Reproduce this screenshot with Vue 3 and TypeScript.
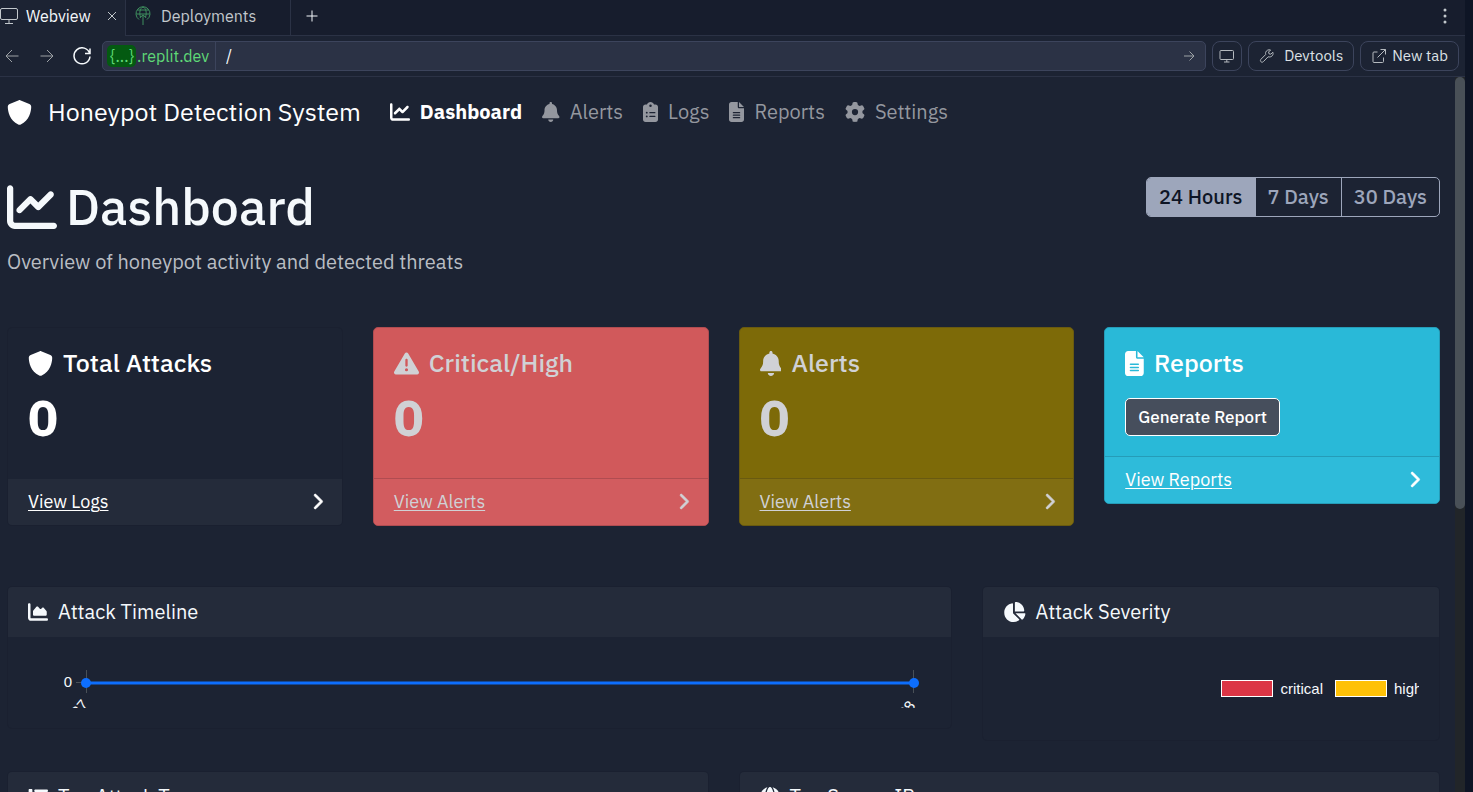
<script setup lang="ts">
import { ref } from 'vue'

interface Glyph {
  w: number
  d: string
}

const glyphs: Record<string, Glyph> = {
  shield: { w: 512, d: 'M256 0c4.6 0 9.2 1 13.4 2.9L457.7 82.8c22 9.3 38.4 31 38.3 57.2c-.5 99.2-41.3 280.7-213.6 363.2c-16.7 8-36.1 8-52.8 0C57.3 420.7 16.5 239.2 16 140c-.1-26.2 16.3-47.9 38.3-57.2L242.7 2.9C246.8 1 251.4 0 256 0z' },
  line: { w: 512, d: 'M64 64c0-17.7-14.3-32-32-32S0 46.3 0 64V400c0 44.2 35.8 80 80 80H480c17.7 0 32-14.3 32-32s-14.3-32-32-32H80c-8.8 0-16-7.2-16-16V64zm406.6 86.6c12.5-12.5 12.5-32.8 0-45.3s-32.8-12.5-45.3 0L320 210.7l-57.4-57.4c-12.5-12.5-32.8-12.5-45.3 0l-112 112c-12.5 12.5-12.5 32.8 0 45.3s32.8 12.5 45.3 0L240 221.3l57.4 57.4c12.5 12.5 32.8 12.5 45.3 0l128-128z' },
  bell: { w: 448, d: 'M224 0c-17.7 0-32 14.3-32 32V51.2C119 66 64 130.6 64 208v18.8c0 47-17.3 92.4-48.5 127.6l-7.4 8.3c-8.4 9.4-10.4 22.9-5.3 34.4S19.4 416 32 416H416c12.6 0 24-7.4 29.2-18.9s3.1-25-5.3-34.4l-7.4-8.3C401.3 319.2 384 273.9 384 226.8V208c0-77.4-55-142-128-156.8V32c0-17.7-14.3-32-32-32zm45.3 493.3c12-12 18.7-28.3 18.7-45.3H224 160c0 17 6.7 33.3 18.7 45.3s28.3 18.7 45.3 18.7s33.3-6.7 45.3-18.7z' },
  clipboard: { w: 384, d: 'M192 0c-41.8 0-77.4 26.7-90.5 64H64C28.7 64 0 92.7 0 128V448c0 35.3 28.7 64 64 64H320c35.3 0 64-28.7 64-64V128c0-35.3-28.7-64-64-64H282.5C269.4 26.7 233.8 0 192 0zm0 64a32 32 0 1 1 0 64 32 32 0 1 1 0-64zM72 272a24 24 0 1 1 48 0 24 24 0 1 1 -48 0zm104-16H304c8.8 0 16 7.2 16 16s-7.2 16-16 16H176c-8.8 0-16-7.2-16-16s7.2-16 16-16zM72 368a24 24 0 1 1 48 0 24 24 0 1 1 -48 0zm88 0c0-8.8 7.2-16 16-16H304c8.8 0 16 7.2 16 16s-7.2 16-16 16H176c-8.8 0-16-7.2-16-16z' },
  file: { w: 384, d: 'M64 0C28.7 0 0 28.7 0 64V448c0 35.3 28.7 64 64 64H320c35.3 0 64-28.7 64-64V160H256c-17.7 0-32-14.3-32-32V0H64zM256 0V128H384L256 0zM112 256H272c8.8 0 16 7.2 16 16s-7.2 16-16 16H112c-8.8 0-16-7.2-16-16s7.2-16 16-16zm0 64H272c8.8 0 16 7.2 16 16s-7.2 16-16 16H112c-8.8 0-16-7.2-16-16s7.2-16 16-16zm0 64H272c8.8 0 16 7.2 16 16s-7.2 16-16 16H112c-8.8 0-16-7.2-16-16s7.2-16 16-16z' },
  gear: { w: 512, d: 'M495.9 166.6c3.2 8.7 .5 18.4-6.4 24.6l-43.3 39.4c1.1 8.3 1.7 16.8 1.7 25.4s-.6 17.1-1.7 25.4l43.3 39.4c6.9 6.2 9.6 15.9 6.4 24.6c-4.4 11.9-9.7 23.3-15.8 34.3l-4.7 8.1c-6.6 11-14 21.4-22.1 31.2c-5.9 7.2-15.7 9.6-24.5 6.8l-55.7-17.7c-13.4 10.3-28.2 18.9-44 25.4l-12.5 57.1c-2 9.1-9 16.3-18.2 17.8c-13.8 2.3-28 3.5-42.5 3.5s-28.7-1.2-42.5-3.5c-9.2-1.5-16.2-8.7-18.2-17.8l-12.5-57.1c-15.8-6.5-30.6-15.1-44-25.4L83.1 425.9c-8.8 2.8-18.6 .3-24.5-6.8c-8.1-9.8-15.5-20.2-22.1-31.2l-4.7-8.1c-6.1-11-11.4-22.4-15.8-34.3c-3.2-8.7-.5-18.4 6.4-24.6l43.3-39.4C64.6 273.1 64 264.6 64 256s.6-17.1 1.7-25.4L22.4 191.2c-6.9-6.2-9.6-15.9-6.4-24.6c4.4-11.9 9.7-23.3 15.8-34.3l4.7-8.1c6.6-11 14-21.4 22.1-31.2c5.9-7.2 15.7-9.6 24.5-6.8l55.7 17.7c13.4-10.3 28.2-18.9 44-25.4l12.5-57.1c2-9.1 9-16.3 18.2-17.8C227.3 1.2 241.5 0 256 0s28.7 1.2 42.5 3.5c9.2 1.5 16.2 8.7 18.2 17.8l12.5 57.1c15.8 6.5 30.6 15.1 44 25.4l55.7-17.7c8.8-2.8 18.6-.3 24.5 6.8c8.1 9.8 15.5 20.2 22.1 31.2l4.7 8.1c6.1 11 11.4 22.4 15.8 34.3zM256 336a80 80 0 1 0 0-160 80 80 0 1 0 0 160z' },
  warning: { w: 512, d: 'M256 32c14.2 0 27.3 7.5 34.5 19.8l216 368c7.3 12.4 7.3 27.7 .2 40.1S486.3 480 472 480H40c-14.3 0-27.6-7.7-34.7-20.1s-7-27.8 .2-40.1l216-368C228.7 39.5 241.8 32 256 32zm0 128c-13.3 0-24 10.7-24 24V296c0 13.3 10.7 24 24 24s24-10.7 24-24V184c0-13.3-10.7-24-24-24zm32 224a32 32 0 1 0 -64 0 32 32 0 1 0 64 0z' },
  chevron: { w: 320, d: 'M310.6 233.4c12.5 12.5 12.5 32.8 0 45.3l-192 192c-12.5 12.5-32.8 12.5-45.3 0s-12.5-32.8 0-45.3L242.7 256 73.4 86.6c-12.5-12.5-12.5-32.8 0-45.3s32.8-12.5 45.3 0l192 192z' },
  area: { w: 512, d: 'M64 64c0-17.7-14.3-32-32-32S0 46.3 0 64V400c0 44.2 35.8 80 80 80H480c17.7 0 32-14.3 32-32s-14.3-32-32-32H80c-8.8 0-16-7.2-16-16V64zm96 288H448c17.7 0 32-14.3 32-32V251.8c0-7.6-2.7-15-7.7-20.8l-65.8-76.8c-12.1-14.2-33.7-15-46.9-1.8l-21 21c-10 10-26.4 9.2-35.4-1.6l-39.2-47c-12.6-15.1-35.7-15.4-48.7-.6L135.9 215c-5.1 5.8-7.9 13.3-7.9 21.1v84c0 17.7 14.3 32 32 32z' },
  pie: { w: 576, d: 'M304 240V16.6c0-9 7-16.6 16-16.6C443.7 0 544 100.3 544 224c0 9-7.6 16-16.6 16H304zM32 272C32 150.7 122.1 50.3 239 34.3c9.2-1.3 17 6.1 17 15.4V288L412.5 444.5c6.7 6.7 6.2 17.7-1.5 23.1C371.8 495.6 323.8 512 272 512C139.5 512 32 404.6 32 272zm526.4 16c9.3 0 16.6 7.8 15.4 17c-7.7 55.9-34.6 105.6-73.9 142.3c-6 5.6-15.4 5.2-21.2-.7L320 288H558.4z' },
  list: { w: 512, d: 'M40 48C26.7 48 16 58.7 16 72v48c0 13.3 10.7 24 24 24H88c13.3 0 24-10.7 24-24V72c0-13.3-10.7-24-24-24H40zM192 64c-17.7 0-32 14.3-32 32s14.3 32 32 32H480c17.7 0 32-14.3 32-32s-14.3-32-32-32H192zm0 160c-17.7 0-32 14.3-32 32s14.3 32 32 32H480c17.7 0 32-14.3 32-32s-14.3-32-32-32H192zm0 160c-17.7 0-32 14.3-32 32s14.3 32 32 32H480c17.7 0 32-14.3 32-32s-14.3-32-32-32H192zM16 232v48c0 13.3 10.7 24 24 24H88c13.3 0 24-10.7 24-24V232c0-13.3-10.7-24-24-24H40c-13.3 0-24 10.7-24 24zM40 368c-13.3 0-24 10.7-24 24v48c0 13.3 10.7 24 24 24H88c13.3 0 24-10.7 24-24V392c0-13.3-10.7-24-24-24H40z' },
  globe: { w: 512, d: 'M352 256c0 22.2-1.2 43.6-3.3 64H163.3c-2.2-20.4-3.3-41.8-3.3-64s1.2-43.6 3.3-64H348.7c2.2 20.4 3.3 41.8 3.3 64zm28.8-64H503.9c5.3 20.5 8.1 41.9 8.1 64s-2.8 43.5-8.1 64H380.8c2.1-20.6 3.2-42 3.2-64s-1.1-43.4-3.2-64zm112.6-32H376.7c-10-63.9-29.8-117.4-55.3-151.6c78.3 20.7 142 77.5 171.9 151.6zm-149.1 0H167.7c6.1-36.4 15.5-68.6 27-94.7c10.5-23.6 22.2-40.7 33.5-51.5C239.4 3.2 248.7 0 256 0s16.6 3.2 27.8 13.8c11.3 10.8 23 27.9 33.5 51.5c11.6 26 20.9 58.2 27 94.7zm-209 0H18.6C48.6 85.9 112.2 29.1 190.6 8.4C165.1 42.6 145.3 96.1 135.3 160zM8.1 192H131.2c-2.1 20.6-3.2 42-3.2 64s1.1 43.4 3.2 64H8.1C2.8 299.5 0 278.1 0 256s2.8-43.5 8.1-64z' },
}

const nav = [
  { label: 'Dashboard', icon: 'line' },
  { label: 'Alerts', icon: 'bell' },
  { label: 'Logs', icon: 'clipboard' },
  { label: 'Reports', icon: 'file' },
  { label: 'Settings', icon: 'gear' },
]

const ranges = ['24 Hours', '7 Days', '30 Days']
const range = ref('24 Hours')
const path = ref('/')

const cards = [
  { title: 'Total Attacks', icon: 'shield', tone: 'plain', link: 'View Logs', count: 0 },
  { title: 'Critical/High', icon: 'warning', tone: 'danger', link: 'View Alerts', count: 0 },
  { title: 'Alerts', icon: 'bell', tone: 'warn', link: 'View Alerts', count: 0 },
  { title: 'Reports', icon: 'file', tone: 'info', link: 'View Reports', count: null },
]
</script>

<template>
  <div class="window">
    <div class="pane">
      <div class="tabs">
        <div class="tab active">
          <svg class="ico18" viewBox="0 0 18 18"><rect x="0.5" y="1.5" width="17" height="11" rx="1.5" /><path d="M9 12.5v3.5M5 16.5h8" /></svg>
          <button class="tab-name">Webview</button>
          <button class="close" aria-label="Close tab"><svg viewBox="0 0 10 10"><path d="M1 1l8 8M9 1l-8 8" /></svg></button>
        </div>
        <div class="tab idle">
          <svg class="deploy" viewBox="0 0 16 20"><path d="M4 13.500A7 7 0 1 1 12 13.500M1.200 8h13.600M2.300 4h11.400M5.500 11C4 7 5 2 8 1c3 1 4 6 2.500 10M8 19V9M4.800 12L8 8.800l3.200 3.200" /></svg>
          <button class="tab-name">Deployments</button>
        </div>
        <button class="add" aria-label="New tab"><svg viewBox="0 0 12 12"><path d="M6 0.500v11M0.500 6h11" /></svg></button>
        <button class="more" aria-label="More"><svg viewBox="0 0 4 16"><circle cx="2" cy="2" r="1.500" /><circle cx="2" cy="8" r="1.500" /><circle cx="2" cy="14" r="1.500" /></svg></button>
      </div>

      <div class="toolbar">
        <button class="tool" aria-label="Back"><svg viewBox="0 0 14 14"><path d="M13.500 7H1M7 1L1 7l6 6" /></svg></button>
        <button class="tool" aria-label="Forward"><svg viewBox="0 0 14 14"><path d="M0.500 7H13M7 1l6 6-6 6" /></svg></button>
        <button class="tool reload" aria-label="Reload"><svg viewBox="0 0 18 18"><path d="M16.700 6.500A8 8 0 1 0 17 9.500M17 1.500v5h-5" /></svg></button>
        <div class="url">
          <span class="host"><span class="brace">{...}</span>.replit.dev</span>
          <input v-model="path" class="path" aria-label="Path">
          <button class="go" aria-label="Go"><svg viewBox="0 0 12 12"><path d="M1 6h10M6.500 1.500L11 6l-4.500 4.500" /></svg></button>
        </div>
        <button class="chip" aria-label="Device size"><svg viewBox="0 0 16 16"><rect x="1" y="2.500" width="13.500" height="9" rx="1" /><path d="M7.800 11.500v2.500M5 14h5.500" /></svg></button>
        <button class="chip wide"><svg viewBox="0 0 16 16"><path d="M13.800 4.200l-2 2-1.800-.4-.4-1.800 2-2C9.800 1.200 7 2.400 6.600 4.600c-.1.700 0 1.300.1 1.900L2 11.200c-.8.800-.8 1.800-.1 2.500s1.800.7 2.500-.1l4.700-4.800c2.900.9 5.900-1.500 4.700-4.600z" /></svg>Devtools</button>
        <button class="chip"><svg viewBox="0 0 16 16"><path d="M6.500 4H3a1 1 0 0 0-1 1v8.500a1 1 0 0 0 1 1h8.500a1 1 0 0 0 1-1V9.500M9.500 1.500H14.500V6.500M14.500 1.500L6.500 9.500" /></svg>New tab</button>
      </div>

      <div class="view">
        <div class="page">
          <header class="navbar">
            <a class="brand" href="#"><svg class="fa" viewBox="0 0 512 512"><path :d="glyphs.shield.d" /></svg>Honeypot Detection System</a>
            <nav class="links">
              <a v-for="(n, i) in nav" :key="n.label" href="#" :class="{ on: i === 0 }">
                <svg class="fa" :viewBox="`0 0 ${glyphs[n.icon].w} 512`"><path :d="glyphs[n.icon].d" /></svg>{{ n.label }}
              </a>
            </nav>
          </header>

          <main>
            <section class="heading">
              <div>
                <h1><svg class="fa" viewBox="0 0 512 512"><path :d="glyphs.line.d" /></svg>Dashboard</h1>
                <p>Overview of honeypot activity and detected threats</p>
              </div>
              <div class="ranges" role="group" aria-label="Time range">
                <button v-for="r in ranges" :key="r" :class="{ on: r === range }" @click="range = r">{{ r }}</button>
              </div>
            </section>

            <section class="stats">
              <article v-for="c in cards" :key="c.title" class="card" :class="c.tone">
                <div class="stat">
                  <h2><svg class="fa" :viewBox="`0 0 ${glyphs[c.icon].w} 512`"><path :d="glyphs[c.icon].d" /></svg>{{ c.title }}</h2>
                  <strong v-if="c.count !== null">{{ c.count }}</strong>
                  <button v-else class="generate">Generate Report</button>
                </div>
                <footer>
                  <a href="#">{{ c.link }}</a>
                  <svg class="fa chevron" viewBox="0 0 320 512"><path :d="glyphs.chevron.d" /></svg>
                </footer>
              </article>
            </section>

            <section class="charts">
              <article class="card">
                <h3><svg class="fa" viewBox="0 0 512 512"><path :d="glyphs.area.d" /></svg>Attack Timeline</h3>
                <div class="timeline">
                  <div class="plot">
                    <svg width="100%" height="51">
                      <path class="grid" d="M-10 25.500H0M0.500 13v23" />
                      <svg x="100%" y="0" overflow="visible"><path class="grid" d="M-0.500 13v23" /></svg>
                      <line x1="0" x2="100%" y1="26" y2="26" />
                      <circle cx="0" cy="26" r="5" />
                      <circle cx="100%" cy="26" r="5" />
                      <text x="-14" y="30" text-anchor="end">0</text>
                      <text transform="translate(3 48) rotate(-50)" text-anchor="end">27</text>
                      <svg x="100%" y="0" overflow="visible"><text transform="translate(2 49) rotate(-50)" text-anchor="end">28</text></svg>
                    </svg>
                  </div>
                </div>
              </article>
              <article class="card">
                <h3><svg class="fa" viewBox="0 0 576 512"><path :d="glyphs.pie.d" /></svg>Attack Severity</h3>
                <div class="severity">
                  <div class="legend">
                    <span class="swatch red"></span><span>critical</span>
                    <span class="swatch yellow"></span><span class="cut">high</span>
                  </div>
                </div>
              </article>
            </section>

            <section class="tables">
              <article class="card"><h3><svg class="fa" viewBox="0 0 512 512"><path :d="glyphs.list.d" /></svg>Top Attack Types</h3></article>
              <article class="card"><h3><svg class="fa" viewBox="0 0 512 512"><path :d="glyphs.globe.d" /></svg>Top Source IPs</h3></article>
            </section>
          </main>
        </div>
        <div class="scrollbar"><div class="thumb"></div></div>
      </div>
    </div>
  </div>
</template>

<style>
body { margin: 0; background: #0e1525; }
</style>

<style scoped>
* { box-sizing: border-box; }
.window {
  height: 100vh; padding-right: 8px; overflow: hidden; background: #0e1525; color: #f5f9fc;
  font-family: "IBM Plex Sans", Roboto, "Liberation Sans", sans-serif; font-size: 20px; line-height: 30px;
}
.pane { height: 100%; display: flex; flex-direction: column; background: #1c2333; }
button, input { font: inherit; color: inherit; background: none; border: 0; padding: 0; margin: 0; }
svg { display: block; flex: none; }
.fa { height: 1em; fill: currentColor; }

.tabs { display: flex; height: 36px; flex: none; background: #171d2d; font-size: 16px; line-height: 20px; }
.tabs svg, .toolbar svg { fill: none; stroke: currentColor; }
.tab { display: flex; align-items: center; padding-bottom: 3px; }
.tab.active { width: 126px; padding-bottom: 4px; background: #1c2333; border-right: 1px solid #2b3245; }
.tab.active .tab-name { margin-left: 8px; }
.ico18 { width: 18px; height: 18px; color: #c2c8cc; }
.close { margin-left: auto; margin-right: 8px; color: #c2c8cc; }
.close svg { width: 10px; height: 10px; }
.tab.idle { width: 165px; padding-left: 9px; gap: 10px; color: #c2c8cc; border-right: 1px solid #2b3245; border-bottom: 1px solid #2b3245; }
.deploy { width: 16px; height: 20px; color: #3f8f5f; }
.add { flex: 1; padding: 0 0 4px 15px; border-bottom: 1px solid #2b3245; }
.add svg { width: 12px; height: 12px; }
.more { padding: 0 18px 4px 0; border-bottom: 1px solid #2b3245; }
.tabs .more svg { width: 4px; height: 16px; fill: #c2c8cc; stroke: none; }

.toolbar { display: flex; align-items: center; gap: 6px; height: 41px; flex: none; padding-right: 6px; border-bottom: 1px solid #2b3245; font-size: 16px; line-height: 20px; }
.tool { width: 29px; padding-left: 5px; color: #9da2a6; }
.tool svg { width: 14px; height: 14px; }
.tool.reload { width: 26px; padding-left: 3px; color: #f5f9fc; }
.tool.reload svg { width: 18px; height: 18px; stroke-width: 1.5; }
.url { flex: 1; min-width: 0; height: 30px; display: flex; align-items: stretch; background: #2b3245; border: 1px solid #3c445c; border-radius: 5px; overflow: hidden; }
.host { display: flex; align-items: center; padding: 0 6px 0 4px; color: #5fd977; border-right: 1px solid #3c445c; }
.brace { margin-right: 1px; background: #045a11; border-radius: 5px; padding: 1px 2px 1px 3px; }
.path { flex: 1; min-width: 0; padding-left: 10px; outline: none; }
.go { padding: 0 10px; color: #9da2a6; }
.go svg { width: 12px; height: 12px; }
.chip { height: 30px; display: flex; align-items: center; gap: 5px; padding: 0 10px; border: 1px solid #3c445c; border-radius: 8px; color: #dde2e6; font-size: 15px; }
.chip svg { width: 16px; height: 16px; color: #b5babf; }
.chip[aria-label] { padding: 0 6px; }
.chip.wide { gap: 9px; }

.view { flex: 1; min-height: 0; display: flex; }
.page { flex: 1; min-width: 0; overflow: hidden; padding: 0 15px 0 7px; background: #1c2333; }
.scrollbar { width: 10px; background: #212529; }
.thumb { height: 60.4%; background: #495057; border-radius: 5px; }

a { color: inherit; text-decoration: none; }
.navbar { display: flex; align-items: center; height: 70px; gap: 19px; }
.brand { display: flex; align-items: center; gap: 16px; font-size: 25px; color: #fff; }
.links { display: flex; }
.links a { display: flex; align-items: center; gap: 10px; padding: 0 10px; color: #94979f; }
.links a.on { color: #fff; font-weight: 700; }

.heading { display: flex; justify-content: space-between; align-items: flex-start; padding-top: 30px; }
h1 { display: flex; align-items: center; gap: 9px; margin: 0; font-size: 50px; line-height: 60px; font-weight: 500; }
p { margin: 10px 0 0; color: #b9bdc3; }
.ranges { display: flex; border: 1px solid #9da6bb; border-radius: 5px; overflow: hidden; }
.ranges button { height: 38px; padding: 0 12px; color: #9da6bb; font-weight: 500; }
.ranges button + button { border-left: 1px solid #9da6bb; }
.ranges .on { background: #9da6bb; color: #0e1525; }

.card { border: 1px solid #1a2030; border-radius: 5px; overflow: hidden; }
.stats { display: grid; grid-template-columns: repeat(4, minmax(0, 1fr)); align-items: start; gap: 30px; margin-top: 50px; }
.stat { padding: 20px; color: #fff; }
h2 { display: flex; align-items: center; gap: 10px; margin: 0; font-size: 25px; line-height: 30px; font-weight: 500; }
strong { display: block; margin: 10px 0 10px; font-size: 50px; line-height: 60px; font-weight: 700; }
.generate { display: block; margin: 20px 0 0; height: 38px; padding: 0 12px; border: 1px solid #fff; border-radius: 5px; background: #464e5c; color: #fff; font-size: 17px; font-weight: 500; }
footer { display: flex; align-items: center; justify-content: space-between; height: 47px; padding: 0 19px 0 20px; border-top: 1px solid #1c2333; background: #242b3a; font-size: 18px; color: #fff; }
footer a { text-decoration: underline; text-underline-offset: 2px; text-decoration-thickness: 1px; }
.chevron { height: 17px; margin-bottom: 2px; stroke: currentColor; stroke-width: 20px; overflow: visible; }
.danger { background: #d1595b; border-color: #b04c51; }
.warn { background: #7d6a08; border-color: #695a10; }
.info { background: #29b9d8; border-color: #259cb8; }
.danger .stat, .warn .stat, .danger footer, .warn footer { color: #d0d1d5; }
.danger footer { background: #d25c5f; border-color: #b04c51; }
.warn footer { background: #816e12; border-color: #695a10; }
.info footer { background: #2ebbda; border-color: #259cb8; }

.charts { display: grid; grid-template-columns: minmax(0, 945fr) minmax(0, 458fr); align-items: start; gap: 30px; margin-top: 60px; }
h3 { display: flex; align-items: center; gap: 10px; height: 50px; margin: 0; padding: 0 20px; background: #242b3a; font-size: 20px; font-weight: 400; }
.timeline { padding: 20px; }
.plot { overflow: hidden; padding: 0 17px 0 58px; }
.plot > svg, .plot > svg svg { overflow: visible; }
.plot line { stroke: #0d6efd; stroke-width: 3; }
.plot circle { fill: #0d6efd; }
.grid { stroke: #495057; fill: none; }
.plot text { fill: #f5f9fc; font-family: "Liberation Sans", sans-serif; font-size: 15px; }
.severity { padding: 40px 20px; }
.legend { display: flex; justify-content: flex-end; align-items: center; height: 23px; font-family: "Liberation Sans", sans-serif; font-size: 15px; gap: 7px; overflow: hidden; }
.swatch { width: 52px; height: 17px; border: 1px solid #fff; }
.red { background: #dc3545; }
.yellow { background: #ffc107; margin-left: 5px; }
.cut { width: 25px; overflow: hidden; }
.tables { display: grid; grid-template-columns: 1fr 1fr; gap: 30px; margin-top: 30px; }
</style>
